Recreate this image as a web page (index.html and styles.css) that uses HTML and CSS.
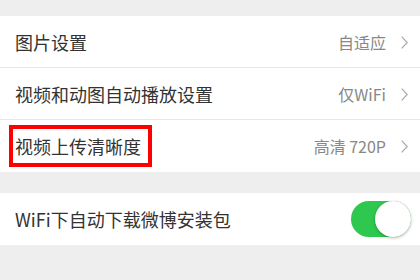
FILE: index.html
```html
<!DOCTYPE html>
<html>
<head>
<meta charset="utf-8">
<link rel="stylesheet" href="styles.css">
</head>
<body>
<div class="page">
  <div class="group">
    <div class="row">
      <span class="label">图片设置</span>
      <span class="value">自适应</span>
      <svg class="chev" width="7" height="13" viewBox="0 0 7 13"><path d="M0.7 0.7 L6.2 6.5 L0.7 12.3" fill="none" stroke="#a8a8a8" stroke-width="1.2"/></svg>
    </div>
    <div class="row">
      <span class="label">视频和动图自动播放设置</span>
      <span class="value">仅WiFi</span>
      <svg class="chev" width="7" height="13" viewBox="0 0 7 13"><path d="M0.7 0.7 L6.2 6.5 L0.7 12.3" fill="none" stroke="#a8a8a8" stroke-width="1.2"/></svg>
    </div>
    <div class="row last">
      <span class="label boxed">视频上传清晰度</span>
      <span class="value">高清 720P</span>
      <svg class="chev" width="7" height="13" viewBox="0 0 7 13"><path d="M0.7 0.7 L6.2 6.5 L0.7 12.3" fill="none" stroke="#a8a8a8" stroke-width="1.2"/></svg>
    </div>
  </div>
  <div class="group">
    <div class="row last toggle-row">
      <span class="label">WiFi下自动下载微博安装包</span>
      <span class="toggle"><span class="knob"></span></span>
    </div>
  </div>
</div>
</body>
</html>
```
FILE: styles.css
```css
html, body {
  margin: 0;
  padding: 0;
  background: #eeeeee;
}
body {
  width: 420px;
  height: 280px;
  overflow: hidden;
  font-family: "Noto Sans CJK SC", "Noto Sans", sans-serif;
}
.page {
  padding-top: 16px;
  display: flex;
  flex-direction: column;
  gap: 21px;
}
.group {
  background: #ffffff;
  display: flex;
  flex-direction: column;
}
.row {
  box-sizing: border-box;
  height: 52px;
  display: flex;
  align-items: center;
  padding: 0 12px 0 15px;
  border-bottom: 1px solid #e6e6e6;
}
.row.last {
  border-bottom: none;
}
.label {
  font-size: 18px;
  color: #333333;
  flex: 1;
  white-space: nowrap;
}
.label.boxed {
  flex: none;
  margin-left: -6px;
  padding: 0 7px 0 2px;
  border: 4px solid #ff0000;
  line-height: 34px;
  margin-right: auto;
}
.value {
  font-size: 16px;
  color: #888888;
  margin-right: 15px;
}
.chev {
  display: block;
  margin-top: 1px;
}
.toggle-row {
  padding-right: 9px;
}
.toggle {
  position: relative;
  width: 60px;
  height: 36px;
  border-radius: 18px;
  background: #2dc84d;
}
.knob {
  position: absolute;
  right: 0;
  top: 0;
  width: 36px;
  height: 36px;
  border-radius: 50%;
  background: #ffffff;
  box-shadow: 0 1px 3px rgba(0, 0, 0, 0.3);
}
```
